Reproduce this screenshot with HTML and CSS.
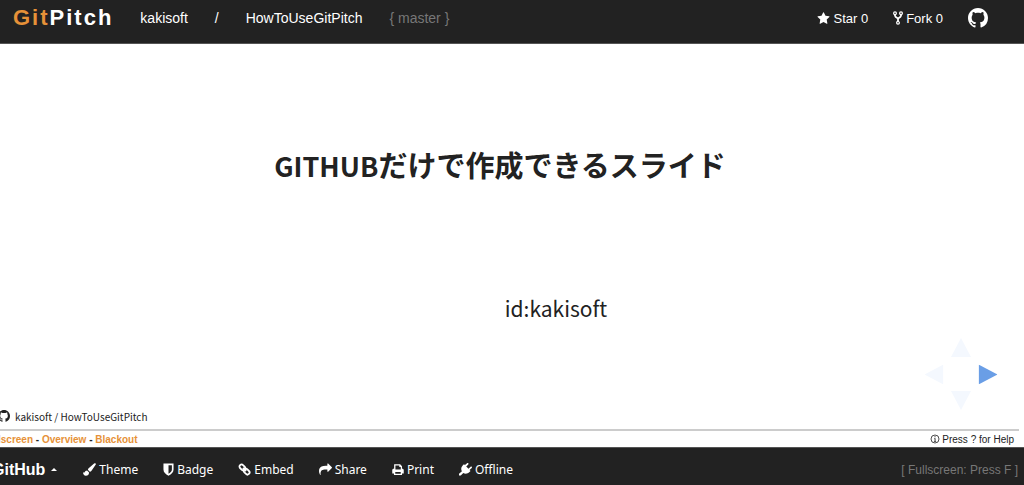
FILE: index.html
```html
<!DOCTYPE html>
<html lang="ja">
<head>
  <meta charset="UTF-8" />
  <meta name="viewport" content="width=device-width, initial-scale=1.0"/>
  <title>GitPitch - HowToUseGitPitch</title>
  <link rel="stylesheet" href="styles.css">
</head>
<body>

  <svg class="sprite" aria-hidden="true">
    <symbol id="github" viewBox="0 0 16 16">
      <path d="M8 0C3.58 0 0 3.58 0 8c0 3.54 2.29 6.53 5.47 7.59.4.07.55-.17.55-.38 0-.19-.01-.82-.01-1.49-2.01.37-2.53-.49-2.69-.94-.09-.23-.48-.94-.82-1.13-.28-.15-.68-.52-.01-.53.63-.01 1.08.58 1.23.82.72 1.21 1.87.87 2.33.66.07-.52.28-.87.51-1.07-1.78-.2-3.64-.89-3.64-3.95 0-.87.31-1.59.82-2.15-.08-.2-.36-1.02.08-2.12 0 0 .67-.21 2.2.82.64-.18 1.32-.27 2-.27s1.36.09 2 .27c1.53-1.04 2.2-.82 2.2-.82.44 1.1.16 1.92.08 2.12.51.56.82 1.27.82 2.15 0 3.07-1.87 3.75-3.65 3.95.29.25.54.73.54 1.48 0 1.07-.01 1.93-.01 2.2 0 .21.15.46.55.38A8.01 8.01 0 0 0 16 8c0-4.42-3.58-8-8-8z"/>
    </symbol>
  </svg>

  <header class="navbar">
    <a class="brand" href="#"><span class="accent">Git</span>Pitch</a>
    <a class="owner" href="#">kakisoft</a>
    <span class="slash">/</span>
    <a class="repo" href="#">HowToUseGitPitch</a>
    <span class="branch">{ master }</span>
    <nav class="social">
      <a href="#"><svg class="icon" viewBox="0 0 1792 1792"><path d="M1728 647q0 22-26 48l-363 354 86 500q1 7 1 20 0 21-10.5 35.5t-30.5 14.5q-19 0-40-12l-449-236-449 236q-22 12-40 12-21 0-31.5-14.5t-10.5-35.5q0-6 2-20l86-500-364-354q-25-27-25-48 0-37 56-46l502-73 225-455q19-41 49-41t49 41l225 455 502 73q56 9 56 46z"/></svg>Star 0</a>
      <a href="#"><svg class="icon icon-fork" viewBox="0 0 10 14"><g fill="none" stroke="currentColor" stroke-width="1.2"><circle cx="2" cy="2.2" r="1.4"/><circle cx="8" cy="2.2" r="1.4"/><circle cx="5" cy="11.8" r="1.4"/><path stroke-width="1.8" d="M2 3.6v1.200q0 1 3 2.800 3-1.800 3-2.800V3.600M5 7.500v3"/></g></svg>Fork 0</a>
      <a href="#" aria-label="GitHub"><svg class="mark"><use href="#github"/></svg></a>
    </nav>
  </header>

  <main class="slide">
    <h1><span class="latin">GITHUB</span>だけで作成できるスライド</h1>
    <p class="author">id:kakisoft</p>
    <div class="controls">
      <button class="up" aria-label="Up"></button>
      <button class="left" aria-label="Previous"></button>
      <button class="right" aria-label="Next"></button>
      <button class="down" aria-label="Down"></button>
    </div>
  </main>

  <div class="credit">
    <svg class="credit-mark"><use href="#github"/></svg>kakisoft / HowToUseGitPitch
  </div>

  <div class="hints">
    <div class="modes"><a href="#">Fullscreen</a> - <a href="#">Overview</a> - <a href="#">Blackout</a></div>
    <div class="help"><svg class="info" viewBox="0 0 10 10"><circle cx="5" cy="5" r="4" fill="none" stroke="currentColor" stroke-width=".8"/><path d="M4.500 2.300h1v1h-1zM4 4.200h1.500v2.900h.6v.6H3.900v-.6h.7V4.800H4z"/></svg>Press ? for Help</div>
  </div>

  <footer class="toolbar">
    <button class="host">GitHub<span class="caret"></span></button>
    <nav class="tools">
      <a href="#"><svg class="icon" viewBox="0 0 16 16"><path d="M14.200.3c.8-.4 1.800.3 1.600 1.300-.1.400-.3.700-.5 1l-4.600 6.500c-.6.9-1.400 1.500-2.300 1.600L6 8.300c.1-.9.600-1.600 1.300-2.300L13.300.8zM5 9.100l2.500 2.600c0 2.500-1.600 4-4 4C1.300 15.700.2 14 0 11.300c1 .7 1.500.8 1.900.2.500-1.500 1.600-2.300 3.100-2.400z"/></svg>Theme</a>
      <a href="#"><svg class="icon icon-shield" viewBox="0 0 12 14"><path fill-rule="evenodd" d="M.5.500h11V7c0 3-2.200 5-5.500 6.700C2.700 12 .5 10 .5 7zM6 2.300v9.300c2.400-1.300 3.700-2.800 3.700-4.600V2.300z"/></svg>Badge</a>
      <a href="#"><svg class="icon" viewBox="0 0 16 16"><g fill="none" stroke="currentColor" stroke-width="2.200"><rect x="1.500" y="2.700" width="7.600" height="5.200" rx="2.400" transform="rotate(45 5.300 5.300)"/><rect x="6.900" y="8.100" width="7.600" height="5.200" rx="2.400" transform="rotate(45 10.700 10.700)"/><path d="M6 6l4 4"/></g></svg>Embed</a>
      <a href="#"><svg class="icon" viewBox="0 0 1792 1792"><path d="M1792 640q0 26-19 45l-512 512q-19 19-45 19t-45-19-19-45v-256h-224q-98 0-175.500 6t-154 21.500-133 42.500-105.500 69.500-80 101-48.500 138.500-17.500 181q0 55 5 123 0 6 2.500 23.500t2.500 26.500q0 15-8.500 25t-23.500 10q-16 0-28-17-7-9-13-22t-13.500-30-10.500-24q-127-285-127-451 0-199 53-333 162-403 875-403h224v-256q0-26 19-45t45-19 45 19l512 512q19 19 19 45z"/></svg>Share</a>
      <a href="#"><svg class="icon icon-print" viewBox="0 0 14 14"><path fill-rule="evenodd" d="M2.500 1h7l2.200 2.200V6h.3c1 0 1.700.7 1.700 1.700v4h-2V13.500H2.300v-1.800h-2v-4C.3 6.700 1 6 2 6h.5zM4 2.300V7h6.200V4.200H8.500V2.300zM3.800 9.800V12h6.400V9.800z"/></svg>Print</a>
      <a href="#"><svg class="icon" viewBox="0 0 16 16"><path d="M15.700 4.600c.4.500.4 1 0 1.400L13 8.700l1.200 1.200-1.300 1.300c-2.300 2.300-5.400 2.600-7.600 1.100L2.200 15.500H0v-2.200l3.600-3.100C2.200 8 2.500 5 4.800 2.700l1.300-1.300 1.200 1.200L9.900.2c.4-.4 1-.4 1.500 0 .4.500.4 1.100 0 1.500L8.900 4.200l2.800 2.900 2.600-2.500c.4-.4 1-.4 1.400 0z"/></svg>Offline</a>
    </nav>
    <span class="fullscreen">[ Fullscreen: Press F ]</span>
  </footer>

</body>
</html>
```

FILE: styles.css
```css
* { box-sizing: border-box; }

body {
  display: flex;
  flex-direction: column;
  min-height: 100vh;
  margin: 0;
  overflow-x: hidden;
  background: #fff;
  color: #222;
  font-family: "Liberation Sans", Arial, sans-serif;
}

a { color: inherit; text-decoration: none; }

button {
  padding: 0;
  border: 0;
  background: none;
  color: inherit;
  font: inherit;
}

svg { fill: currentColor; }

.sprite { display: none; }

.icon { width: 13px; height: 13px; }
.icon-fork { width: 10px; height: 14px; }
.icon-shield { width: 11px; }
.icon-print { width: 12px; }

/* top bar */
.navbar {
  display: flex;
  align-items: center;
  height: 44px;
  padding: 0 36px 7px 13px;
  background: #222;
  border-bottom: 1px solid #555;
  color: #fff;
  font-size: 14px;
}

.brand {
  margin-right: 27px;
  font-size: 22px;
  font-weight: bold;
  letter-spacing: 2px;
}

.accent { color: #e69138; }
.slash { margin: 0 27px; }
.branch { margin-left: 27px; color: #777; }

.social {
  display: flex;
  align-items: center;
  gap: 25px;
  margin-left: auto;
  font-size: 13px;
}

.social a {
  display: flex;
  align-items: center;
  gap: 3px;
}

.mark { width: 20px; height: 20px; }

/* slide */
.slide {
  position: relative;
  flex: 1;
  padding: 96px 24px 0 0;
  text-align: center;
}

h1 {
  margin: 0;
  font-family: "Noto Sans CJK JP", sans-serif;
  font-size: 29px;
  line-height: 48px;
  font-weight: bold;
}

.latin { font-size: 27px; }

.author {
  margin: 96px 0 0 112px;
  font-family: "Noto Sans CJK JP", sans-serif;
  font-size: 21px;
  line-height: 44px;
}

.controls {
  position: absolute;
  right: 26px;
  bottom: -5px;
  display: grid;
  grid-template-columns: 20px 20px 20px;
  grid-template-rows: 19px 20px 19px;
  gap: 7px;
  align-items: center;
  justify-items: center;
}

.controls button {
  width: 20px;
  height: 19px;
  background: #f4f8fe;
  clip-path: polygon(50% 0, 100% 100%, 0 100%);
}

.controls .up { grid-area: 1 / 2; }
.controls .left { grid-area: 2 / 1; transform: rotate(-90deg); }
.controls .right { grid-area: 2 / 3; transform: rotate(90deg); background: #6a9ee6; }
.controls .down { grid-area: 3 / 2; transform: rotate(180deg); }

/* repository credit and key hints */
.credit {
  display: flex;
  align-items: center;
  gap: 5px;
  height: 26px;
  margin-right: 5px;
  margin-left: -2px;
  padding-bottom: 2px;
  border-bottom: 2px solid #ccc;
  font-family: "Noto Sans CJK JP", sans-serif;
  font-size: 10px;
}

.credit-mark { width: 12px; height: 12px; }

.hints {
  display: flex;
  align-items: center;
  justify-content: space-between;
  height: 16px;
  margin-left: -17px;
  padding-right: 10px;
  font-size: 10px;
}

.modes { font-weight: bold; }
.modes a { color: #e69138; }

.help {
  display: flex;
  align-items: center;
  gap: 2px;
}

.info { width: 10px; height: 10px; }

/* bottom bar */
.toolbar {
  display: flex;
  align-items: center;
  height: 38px;
  padding: 6px 6px 0 0;
  background: #222;
  border-top: 1px solid #555;
  color: #fff;
  font-size: 12px;
}

.host {
  display: flex;
  align-items: center;
  gap: 6px;
  margin: 0 26px 0 -8px;
  font-size: 16px;
  font-weight: bold;
}

.caret {
  border: 3px solid transparent;
  border-top: 0;
  border-bottom-color: #fff;
}

.tools {
  display: flex;
  gap: 25px;
  font-family: "Noto Sans", sans-serif;
}

.tools a {
  display: flex;
  align-items: center;
  gap: 3px;
}

.fullscreen {
  margin-left: auto;
  color: #777;
}
```
